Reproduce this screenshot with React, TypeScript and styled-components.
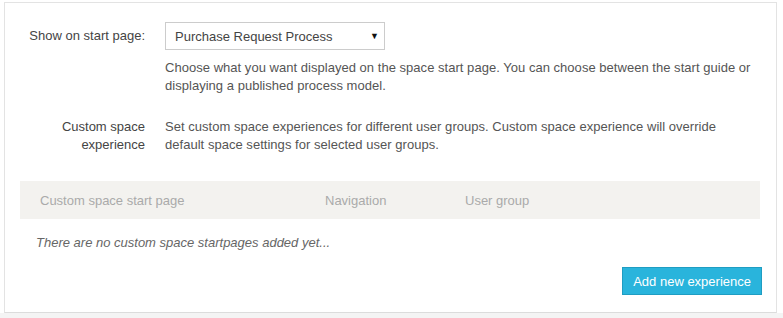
import React from "react";
import styled, { createGlobalStyle } from "styled-components";

const Global = createGlobalStyle`
  html, body { margin: 0; padding: 0; background: #ffffff; }
  body { font-family: "Liberation Sans", Arial, sans-serif; font-size: 13px; color: #444; }
`;

const Page = styled.div`
  padding: 2px 6px 0 4px;
  min-height: 318px;
  box-sizing: border-box;
  display: flex;
  flex-direction: column;
`;

const Panel = styled.section`
  width: 773px;
  box-sizing: border-box;
  border: 1px solid #e3e3e3;
  border-bottom-color: #dcdcdc;
  background: #fff;
  padding: 19px 15px 17px 15px;
  display: flex;
  flex-direction: column;
`;

const Footer = styled.div`
  flex: 1;
  background: #f4f4f4;
  margin-left: -4px;
  margin-right: -6px;
`;

const FieldRow = styled.div<{ $mt?: number }>`
  display: grid;
  grid-template-columns: 125px 1fr;
  column-gap: 20px;
  margin-top: ${(p) => p.$mt ?? 0}px;
`;

const Label = styled.div<{ $center?: boolean }>`
  text-align: right;
  color: #444;
  line-height: 18px;
  align-self: ${(p) => (p.$center ? "center" : "start")};
`;

const Field = styled.div`
  display: flex;
  flex-direction: column;
`;

const Select = styled.div`
  width: 220px;
  height: 28px;
  box-sizing: border-box;
  border: 1px solid #cccccc;
  display: flex;
  align-items: center;
  justify-content: space-between;
  padding: 0 5px 0 9px;
  color: #444;
  font-size: 13px;
`;

const Caret = styled.span`
  font-size: 9px;
  color: #111;
`;

const Help = styled.p<{ $mt?: number }>`
  margin: ${(p) => p.$mt ?? 0}px 0 0 0;
  max-width: 586px;
  color: #555;
  line-height: 18px;
  letter-spacing: 0.03px;
`;

const Table = styled.div`
  margin: 27px 0 0 0;
  width: 740px;
`;

const HeaderRow = styled.div`
  display: grid;
  grid-template-columns: 285px 140px 1fr;
  height: 38px;
  align-items: center;
  background: #f3f2ef;
  padding-left: 20px;
  color: #aaaaaa;
`;

const Empty = styled.div`
  font-style: italic;
  color: #666;
  padding: 16px 0 0 16px;
  line-height: 16px;
`;

const Actions = styled.div`
  display: flex;
  justify-content: flex-end;
  width: 742px;
  margin-top: 16px;
`;

const Button = styled.button`
  font-family: "Liberation Sans", Arial, sans-serif;
  font-size: 13px;
  color: #fff;
  background: #29b4dc;
  border: 1px solid #1f9dc2;
  height: 28px;
  padding: 0 10px;
  cursor: pointer;
`;

export default function App() {
  return (
    <>
      <Global />
      <Page>
        <Panel>
          <FieldRow>
            <Label $center>Show on start page:</Label>
            <Select>
              <span>Purchase Request Process</span>
              <Caret>▼</Caret>
            </Select>
          </FieldRow>
          <FieldRow>
            <div />
            <Help $mt={9}>
              Choose what you want displayed on the space start page. You can choose between the start guide or
              displaying a published process model.
            </Help>
          </FieldRow>
          <FieldRow $mt={23}>
            <Label>
              Custom space
              <br />
              experience
            </Label>
            <Field>
              <Help>
                Set custom space experiences for different user groups. Custom space experience will override
                default space settings for selected user groups.
              </Help>
            </Field>
          </FieldRow>
          <Table>
            <HeaderRow>
              <span>Custom space start page</span>
              <span>Navigation</span>
              <span>User group</span>
            </HeaderRow>
            <Empty>There are no custom space startpages added yet...</Empty>
          </Table>
          <Actions>
            <Button>Add new experience</Button>
          </Actions>
        </Panel>
        <Footer />
      </Page>
    </>
  );
}
